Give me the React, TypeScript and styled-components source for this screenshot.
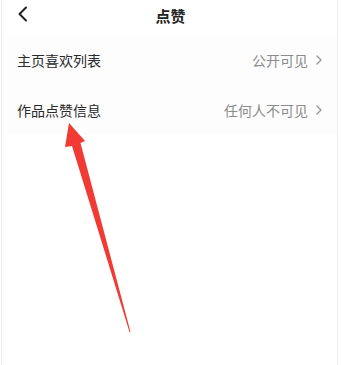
import React from 'react';
import styled, { createGlobalStyle } from 'styled-components';

const GlobalStyle = createGlobalStyle`
  html, body {
    margin: 0;
    padding: 0;
    background: #ffffff;
    font-family: "Noto Sans CJK SC", "Noto Sans", sans-serif;
  }
`;

const settings = [
  { label: '主页喜欢列表', value: '公开可见' },
  { label: '作品点赞信息', value: '任何人不可见' },
];

const App: React.FC = () => (
  <>
    <GlobalStyle />
    <Page>
      <Header>
        <BackButton aria-label="返回">
          <svg width="12" height="16" viewBox="0 0 12 16">
            <path d="M9 1.5 L2.5 8 L9 14.5" fill="none" stroke="#222" strokeWidth="2" strokeLinecap="round" strokeLinejoin="round" />
          </svg>
        </BackButton>
        <Title>点赞</Title>
      </Header>
      <List>
        {settings.map((item) => (
          <Row key={item.label}>
            <Label>{item.label}</Label>
            <Value>
              {item.value}
              <svg width="8" height="12" viewBox="0 0 8 12">
                <path d="M2 2 L6 6 L2 10" fill="none" stroke="#999" strokeWidth="1.4" strokeLinecap="round" strokeLinejoin="round" />
              </svg>
            </Value>
          </Row>
        ))}
      </List>
      <Arrow width="341" height="365" viewBox="0 0 341 365">
        <polygon
          points="68,123 84,141 79.5,143 129.5,332 128.5,332 71,146 64,147"
          fill="#f23a35"
        />
      </Arrow>
    </Page>
  </>
);

const Page = styled.div`
  position: relative;
  width: 337px;
  height: 365px;
  margin-left: 1px;
  border-left: 1px solid #ededed;
  border-right: 1px solid #ededed;
  background: #ffffff;
  box-sizing: border-box;
  overflow: hidden;
`;

const Header = styled.div`
  position: relative;
  height: 30px;
  display: flex;
  align-items: center;
  justify-content: center;
`;

const BackButton = styled.div`
  position: absolute;
  left: 15px;
  top: 6px;
  display: flex;
`;

const Title = styled.div`
  font-size: 15px;
  font-weight: 600;
  color: #222;
  margin-left: 2px;
`;

const List = styled.div`
  display: flex;
  flex-direction: column;
  padding-top: 5px;
`;

const Row = styled.div`
  height: 50px;
  display: flex;
  align-items: center;
  justify-content: space-between;
  padding: 0 14px 0 15px;
  background: #fdfdfd;
`;

const Label = styled.div`
  font-size: 14px;
  color: #2a2a2a;
`;

const Value = styled.div`
  display: flex;
  align-items: center;
  gap: 7px;
  font-size: 14px;
  color: #8c8c8c;
`;

const Arrow = styled.svg`
  position: absolute;
  left: -1px;
  top: 0;
  pointer-events: none;
`;

export default App;
